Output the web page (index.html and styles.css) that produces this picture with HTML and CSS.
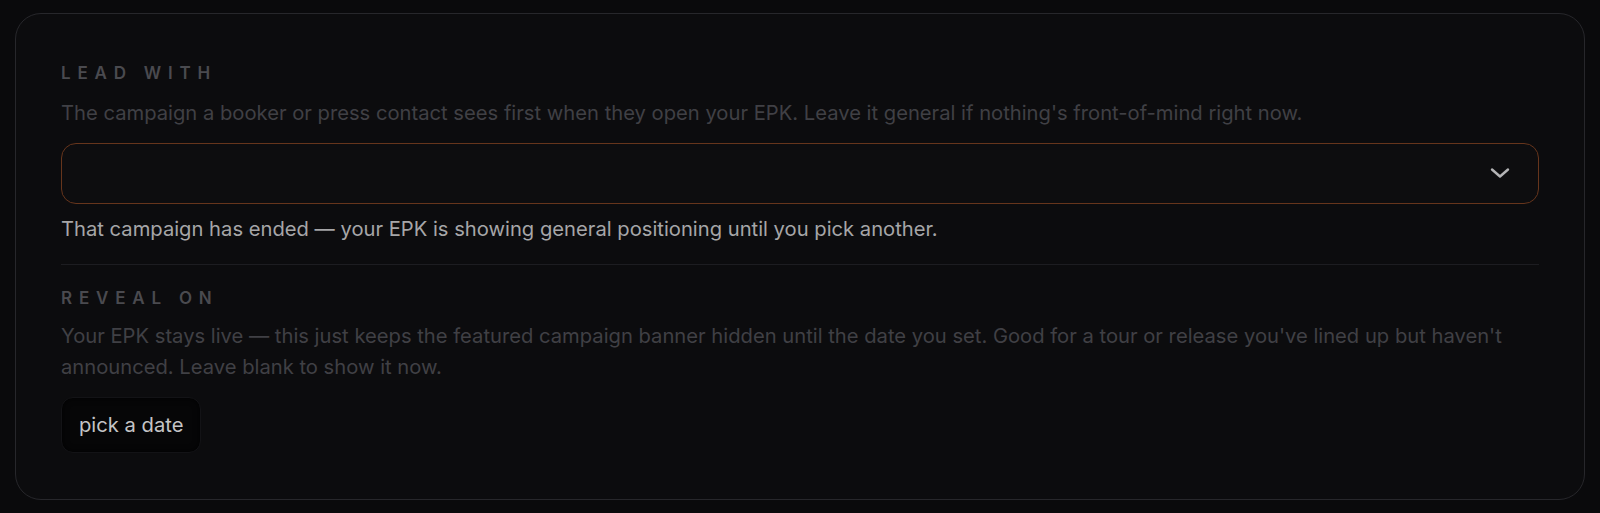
FILE: index.html
```html
<!DOCTYPE html>
<html lang="en">
<head>
<meta charset="utf-8">
<title>EPK settings</title>
<link rel="stylesheet" href="styles.css">
</head>
<body>
<section class="card">
  <div class="field">
    <div class="label">LEAD WITH</div>
    <p class="desc">The campaign a booker or press contact sees first when they open your EPK. Leave it general if nothing's front-of-mind right now.</p>
    <div class="select">
      <svg class="chev" width="20" height="12" viewBox="0 0 20 12" aria-hidden="true"><path d="M2 2.5 L10 9.5 L18 2.5" fill="none" stroke="#b4b4b6" stroke-width="2.4" stroke-linecap="round" stroke-linejoin="round"/></svg>
    </div>
    <p class="note">That campaign has ended — your EPK is showing general positioning until you pick another.</p>
  </div>
  <hr class="divider">
  <div class="field field-reveal">
    <div class="label">REVEAL ON</div>
    <p class="desc">Your EPK stays live — this just keeps the featured campaign banner hidden until the date you set. Good for a tour or release you've lined up but haven't announced. Leave blank to show it now.</p>
    <div class="actions"><button class="date-btn" type="button">pick a date</button></div>
  </div>
</section>
</body>
</html>
```
FILE: styles.css
```css
* { box-sizing: border-box; }
html, body { margin: 0; background: #0a0a0c; }
body {
  padding: 13px 15px 13px 15px;
  font-family: Inter, "Noto Sans", sans-serif;
}
.card {
  border: 1px solid #27272b;
  border-radius: 26px;
  background: #0c0c0e;
  padding: 48px 45px 46px 45px;
  display: flex;
  flex-direction: column;
}
.field { display: flex; flex-direction: column; }
.label {
  font-size: 17px;
  font-weight: 600;
  letter-spacing: 0.4em;
  color: #4a4a4f;
  line-height: 22px;
}
.desc {
  margin: 13px 0 0 0;
  font-size: 20.2px;
  line-height: 31.5px;
  color: #404045;
}
.field-reveal .desc { margin-top: 11px; }
.select {
  margin-top: 14px;
  height: 61px;
  border: 1.5px solid #66351c;
  border-radius: 15px;
  background: #0d0d0f;
  display: flex;
  align-items: center;
  justify-content: flex-end;
  padding-right: 28px;
}
.chev { display: block; }
.note {
  margin: 9px 0 0 0;
  font-size: 20.2px;
  line-height: 31px;
  color: #a6a6a8;
}
.divider {
  border: 0;
  height: 1px;
  background: #1d1d21;
  margin: 20px 0 22px 0;
}
.actions { margin-top: 14px; display: flex; }
.date-btn {
  font-family: inherit;
  font-size: 20.2px;
  color: #c4c4c6;
  background: #060607;
  border: 1px solid #131316;
  border-radius: 12px;
  height: 56px;
  padding: 0 17px;
  box-shadow: inset 0 0 6px rgba(0,0,0,0.8);
}
```
